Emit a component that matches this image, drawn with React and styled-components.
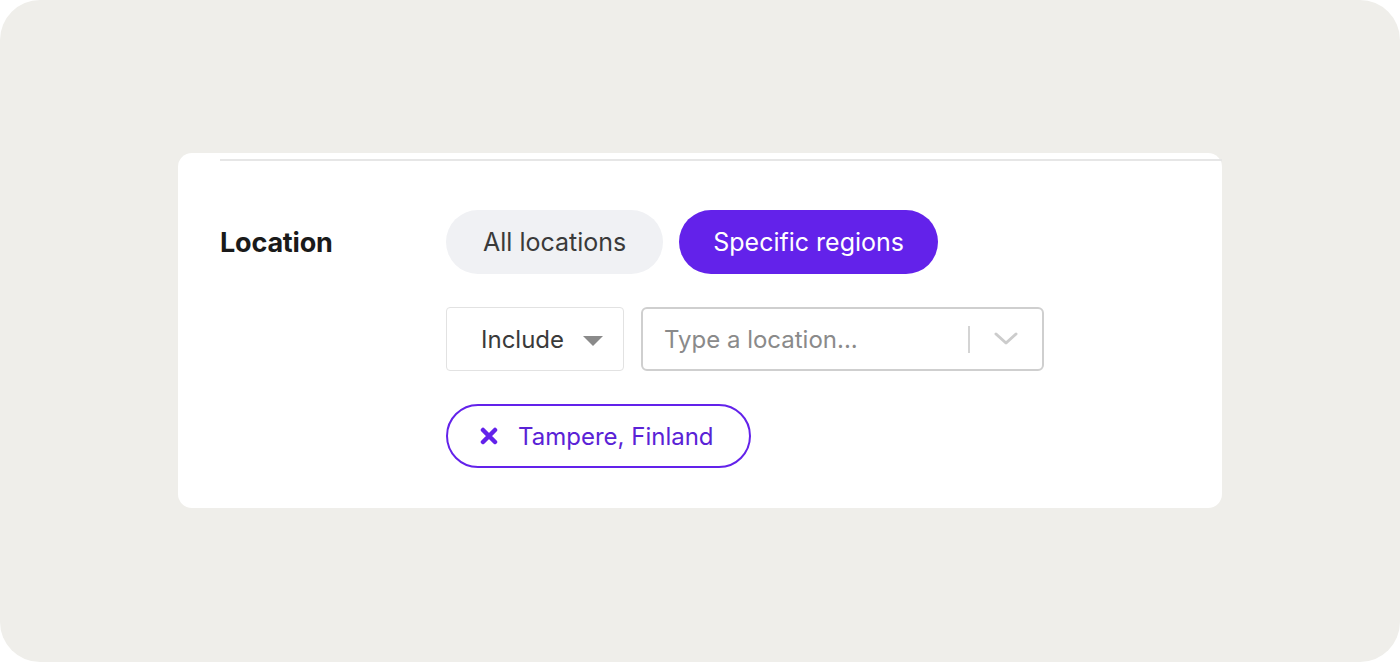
import React from 'react'
import styled, { createGlobalStyle } from 'styled-components'

const Global = createGlobalStyle`
    html, body {
        margin: 0;
        padding: 0;
        background: #ffffff;
    }
    body {
        font-family: Inter, "Noto Sans", sans-serif;
    }
`;

const Stage = styled.div`
    width: 1400px;
    height: 662px;
    border-radius: 40px;
    background: #efeeea;
    display: flex;
    align-items: flex-start;
    justify-content: center;
    padding-top: 153px;
    box-sizing: border-box;
`;

const Card = styled.div`
    width: 1044px;
    box-sizing: border-box;
    background: #fff;
    border-radius: 14px;
    padding: 6px 0 40px 42px;
`;

const TopRule = styled.div`
    height: 2px;
    background: #e6e6e6;
    margin-bottom: 49px;
`;

const Row = styled.div`
    display: grid;
    grid-template-columns: 226px 1fr;
    align-items: start;
`;

const Label = styled.div`
    font-size: 27px;
    font-weight: 700;
    color: #1a1a1a;
    line-height: 66px;
    letter-spacing: -0.2px;
`;

const Controls = styled.div`
    display: flex;
    flex-direction: column;
    gap: 33px;
    align-items: flex-start;
`;

const Line = styled.div`
    display: flex;
    gap: ${p => p.$gap || 16}px;
`;

const Pill = styled.button`
    height: 64px;
    padding: 0 ${p => p.$pad}px;
    border: none;
    border-radius: 32px;
    font-family: inherit;
    font-size: 25px;
    background: ${p => (p.$active ? '#6322ea' : '#f0f1f4')};
    color: ${p => (p.$active ? '#fff' : '#3a3a3a')};
    cursor: pointer;
`;

const Select = styled.div`
    width: 178px;
    height: 64px;
    box-sizing: border-box;
    border: 1px solid #e2e2e2;
    border-radius: 4px;
    display: flex;
    align-items: center;
    padding: 0 20px 0 34px;
    justify-content: space-between;
    font-size: 24px;
    color: #3a3a3a;
`;

const Caret = styled.span`
    width: 0;
    height: 0;
    border-left: 10px solid transparent;
    border-right: 10px solid transparent;
    border-top: 10px solid #8a8a8a;
    margin-top: 4px;
`;

const Field = styled.div`
    width: 403px;
    height: 64px;
    box-sizing: border-box;
    border: 2px solid #cfcfcf;
    border-radius: 6px;
    display: flex;
    align-items: center;
    padding: 0 24px 0 21px;
`;

const Placeholder = styled.span`
    flex: 1;
    font-size: 24px;
    color: #8a8a8a;
`;

const Divider = styled.span`
    width: 2px;
    height: 27px;
    background: #d4d4d4;
    margin-right: 24px;
`;

const Tag = styled.div`
    height: 64px;
    box-sizing: border-box;
    border: 2px solid #6322ea;
    border-radius: 32px;
    display: flex;
    align-items: center;
    gap: 20px;
    padding: 0 35px 0 32px;
    font-size: 24px;
    color: #5a22d6;
`;

export default function App() {
    return (
        <>
            <Global />
            <Stage>
                <Card>
                    <TopRule />
                    <Row>
                        <Label>Location</Label>
                        <Controls>
                            <Line>
                                <Pill $pad={37}>All locations</Pill>
                                <Pill $pad={34} $active>Specific regions</Pill>
                            </Line>
                            <Line $gap={17}>
                                <Select>
                                    Include
                                    <Caret />
                                </Select>
                                <Field>
                                    <Placeholder>Type a location...</Placeholder>
                                    <Divider />
                                    <svg width="24" height="14" viewBox="0 0 24 14">
                                        <path d="M2 2 L12 11 L22 2" fill="none" stroke="#cccccc" strokeWidth="3" strokeLinecap="round" strokeLinejoin="round" />
                                    </svg>
                                </Field>
                            </Line>
                            <Tag>
                                <svg width="18" height="18" viewBox="0 0 18 18">
                                    <path d="M3 3 L15 15 M15 3 L3 15" stroke="#6322ea" strokeWidth="4.5" strokeLinecap="round" />
                                </svg>
                                Tampere, Finland
                            </Tag>
                        </Controls>
                    </Row>
                </Card>
            </Stage>
        </>
    )
}
